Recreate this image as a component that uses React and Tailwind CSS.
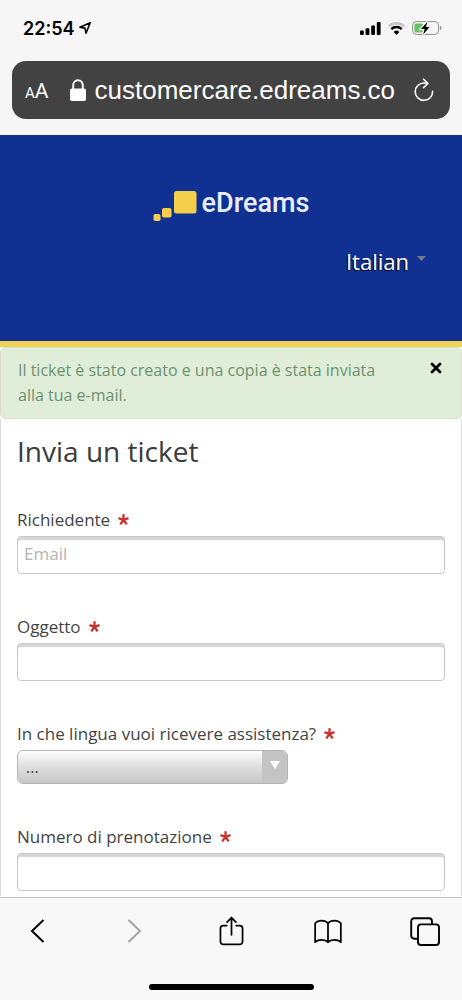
import { useState } from 'react'

const LABEL = 'font-["Open_Sans",sans-serif] text-[17px] leading-[25px] text-[#444]'
const INPUT =
  'h-[38px] w-full rounded-[4px] border border-[#c9c9c9] bg-white px-[6px] pb-[3px] font-["Open_Sans",sans-serif] text-[17px] text-[#444] shadow-[inset_0_3px_1px_#d6d6d6] placeholder:text-[#b5b5b5] focus:outline-none'
const TOOL = 'flex w-[30px] justify-center'

function StatusBar() {
  return (
    <div className="flex h-[61px] items-center justify-between px-5 pb-[5px] pl-[23px]">
      <div className="flex items-center gap-[5px] font-[Inter,sans-serif] text-[18px] font-semibold text-black">
        <span>22:54</span>
        <svg className="h-3 w-3" viewBox="0 0 12 12" fill="none" stroke="currentColor" strokeWidth="1.6" strokeLinejoin="round">
          <path d="M11.2 0.8 L0.9 5.2 L5.9 6.1 L7 11.2 Z" />
        </svg>
      </div>
      <div className="flex items-center gap-[7px]">
        <svg className="h-[13px] w-[21px]" viewBox="0 0 21 13">
          <rect x="0" y="8.5" width="3.8" height="4.5" rx="1" />
          <rect x="5.6" y="6.2" width="3.8" height="6.8" rx="1" />
          <rect x="11.2" y="3.4" width="3.8" height="9.6" rx="1" />
          <rect x="16.8" y="0" width="3.8" height="13" rx="1" />
        </svg>
        <svg className="h-[13px] w-[17px]" viewBox="0 0 17 13" fill="none">
          <path d="M1 4.2 A11 11 0 0 1 16 4.2" stroke="#c4c4c4" strokeWidth="2.4" />
          <path d="M3.3 7.1 A7.6 7.6 0 0 1 13.7 7.1" stroke="#000" strokeWidth="2.5" />
          <path d="M5.7 9.9 A4 4 0 0 1 11.3 9.9 L8.5 12.9 Z" fill="#000" />
        </svg>
        <svg className="h-[14px] w-[30px]" viewBox="0 0 30 14">
          <rect x="0.6" y="0.6" width="26" height="12.8" rx="3.6" fill="none" stroke="#8c8c8c" />
          <rect x="2.4" y="2.4" width="9" height="9.2" rx="1.6" fill="#62c466" />
          <path d="M28.2 4.8 a2.4 2.4 0 0 1 0 4.4 Z" fill="#8c8c8c" />
          <path d="M15.4 0.8 L9 8 H12.6 L11.2 13.4 L17.6 6 H14 Z" fill="#000" stroke="#f6f6f6" strokeWidth="2.6" paintOrder="stroke" />
        </svg>
      </div>
    </div>
  )
}

function AddressBar() {
  return (
    <div className="mx-3 mb-4 flex h-[58px] items-center rounded-[14px] bg-[#424242] pr-4 pl-[13px] text-white">
      <button type="button" aria-label="Dimensione testo" className="mt-1 flex items-baseline font-[Roboto,sans-serif]">
        <span className="text-[15px] leading-6">A</span>
        <span className="text-[21px] leading-6">A</span>
      </button>
      <svg className="ml-[21px] h-[22px] w-4 shrink-0" viewBox="0 0 16 22">
        <rect x="0" y="9.6" width="16" height="12.4" rx="1.8" fill="#fff" />
        <path d="M3.2 10.5 V6.2 a4.8 5 0 0 1 9.6 0 V10.5" fill="none" stroke="#fff" strokeWidth="1.9" />
      </svg>
      <span className="ml-[9px] min-w-0 flex-1 overflow-hidden font-['Liberation_Sans',sans-serif] text-[26px] leading-8 whitespace-nowrap">
        customercare.edreams.co
      </span>
      <button type="button" aria-label="Ricarica" className="ml-2 shrink-0">
        <svg className="h-[24px] w-5" viewBox="0 0 20 24" fill="none" stroke="#fff" strokeWidth="1.6" strokeLinecap="round" strokeLinejoin="round">
          <path d="M18.6 13.4 A8.7 8.7 0 1 1 10 5 L13.4 5.3" />
          <path d="M9.6 1.2 L13.8 5.4 L9.6 9.6" />
        </svg>
      </button>
    </div>
  )
}

function Header() {
  return (
    <header className="flex h-[212px] shrink-0 flex-col border-b-6 border-[#f1d352] bg-[#113192] pt-[52px]">
      <a href="#" className="flex h-[36px] items-start justify-center">
        <svg className="mt-[3px] h-[32px] w-[44px]" viewBox="0 0 44 32" fill="#f5cf4c">
          <rect x="0.5" y="24" width="7" height="7" rx="1.8" />
          <rect x="9" y="18" width="9.5" height="9.5" rx="2" />
          <rect x="21" y="1" width="22.5" height="22.5" rx="2.5" />
        </svg>
        <span className="ml-[5px] font-[Roboto,sans-serif] text-[27px] leading-8 font-medium text-[#e6eeff]">
          eDreams
        </span>
      </a>
      <button
        type="button"
        className="mt-[22px] mr-9 flex items-center gap-2 self-end font-['Open_Sans',sans-serif] text-[22px] leading-8 text-white [text-shadow:-1px_1px_0_#000]"
      >
        Italian
        <svg className="mb-[6px] h-[5px] w-[9px]" viewBox="0 0 9 5" fill="#75798a">
          <path d="M0 0 H9 L4.5 5 Z" />
        </svg>
      </button>
    </header>
  )
}

function Notice({ onClose }) {
  return (
    <div
      role="status"
      className="flex items-start justify-between rounded-[5px] border border-[#d9dfc9] bg-[#e0eed9] py-[10px] pr-[19px] pl-[17px]"
    >
      <p className="max-w-[370px] font-['Open_Sans',sans-serif] text-[16px] leading-[25px] text-[#6b9171]">
        Il ticket è stato creato e una copia è stata inviata alla tua e-mail.
      </p>
      <button type="button" aria-label="Chiudi" onClick={onClose} className="mt-1">
        <svg className="h-3 w-3" viewBox="0 0 12 12" stroke="#000" strokeWidth="2.8" strokeLinecap="round">
          <path d="M2 2 L10 10 M10 2 L2 10" />
        </svg>
      </button>
    </div>
  )
}

function Field({ id, label, children }) {
  return (
    <div className="flex flex-col gap-1">
      <label htmlFor={id} className={LABEL}>
        {label}
        <svg className="mb-1 ml-2 inline-block h-[11px] w-[11px]" viewBox="0 0 11 11" stroke="#cb2f2b" strokeWidth="2.3">
          <path d="M5.5 5.8 V0.3 M5.5 5.8 L0.5 4.2 M5.5 5.8 L10.5 4.2 M5.5 5.8 L2.3 10.4 M5.5 5.8 L8.7 10.4" />
        </svg>
      </label>
      {children}
    </div>
  )
}

function Toolbar() {
  return (
    <nav className="shrink-0 border-t border-[#c4c4c4] bg-[#f8f8f8] pb-[10px]">
      <div className="flex h-[66px] items-center justify-between px-[22px]">
        <button type="button" aria-label="Indietro" className={TOOL}>
          <svg className="h-6 w-[15px]" viewBox="0 0 15 24" fill="none" stroke="#000" strokeWidth="2">
            <path d="M13.5 1 L2 12 L13.5 23" />
          </svg>
        </button>
        <button type="button" aria-label="Avanti" disabled className={TOOL}>
          <svg className="h-6 w-[15px]" viewBox="0 0 15 24" fill="none" stroke="#a3a3a3" strokeWidth="2">
            <path d="M1.5 1 L13 12 L1.5 23" />
          </svg>
        </button>
        <button type="button" aria-label="Condividi" className={TOOL}>
          <svg className="h-[30px] w-[25px]" viewBox="0 0 26 31" fill="none" stroke="#000" strokeWidth="1.8" strokeLinecap="round" strokeLinejoin="round">
            <path d="M8 9.8 H4.5 a3 3 0 0 0 -3 3 V26.5 a3 3 0 0 0 3 3 H21.5 a3 3 0 0 0 3 -3 V12.8 a3 3 0 0 0 -3 -3 H18" />
            <path d="M13 19.5 V1.5 M8.4 6.2 L13 1.5 L17.6 6.2" />
          </svg>
        </button>
        <button type="button" aria-label="Preferiti" className={TOOL}>
          <svg className="h-[25px] w-[28px]" viewBox="0 0 29 25" fill="none" stroke="#000" strokeWidth="1.8" strokeLinejoin="round">
            <path d="M14.5 4 C11.5 0.4 4.5 0.3 1.2 4 V23.6 C4.5 20.5 11.5 20.5 14.5 23.6 C17.5 20.5 24.5 20.5 27.8 23.6 V4 C24.5 0.3 17.5 0.4 14.5 4 Z" />
            <path d="M14.5 4 V23.6" />
          </svg>
        </button>
        <button type="button" aria-label="Schede" className={TOOL}>
          <svg className="h-[29px] w-[30px]" viewBox="0 0 30 29" fill="none" stroke="#000" strokeWidth="1.9">
            <path d="M8 21.8 H4.2 a3 3 0 0 1 -3 -3 V4.2 a3 3 0 0 1 3 -3 H19 a3 3 0 0 1 3 3 V7.5" />
            <rect x="8" y="7.4" width="21" height="20.6" rx="3" />
          </svg>
        </button>
      </div>
      <div className="mx-auto mt-5 h-[6px] w-[165px] rounded-full bg-black" />
    </nav>
  )
}

export default function App() {
  const [noticeOpen, setNoticeOpen] = useState(true)

  return (
    <div className="flex min-h-screen flex-col bg-[#f6f6f6]">
      <StatusBar />
      <AddressBar />
      <Header />
      <main className="flex-1 bg-white">
        {noticeOpen && <Notice onClose={() => setNoticeOpen(false)} />}
        <form className="border-x border-[#dcdcdc] px-4 pt-[14px] pb-[5px]">
          <h1 className="font-['Open_Sans',sans-serif] text-[28px] leading-9 text-[#3b3b3b]">Invia un ticket</h1>
          <div className="mt-[38px] flex flex-col gap-10">
            <Field id="requester" label="Richiedente">
              <input id="requester" type="email" placeholder="Email" className={INPUT} />
            </Field>
            <Field id="subject" label="Oggetto">
              <input id="subject" type="text" className={INPUT} />
            </Field>
            <Field id="language" label="In che lingua vuoi ricevere assistenza?">
              <div className="relative w-[271px]">
                <select
                  id="language"
                  className="h-[34px] w-full appearance-none rounded-[6px] border border-[#b5b5b5] bg-linear-to-b from-white via-[#dedede] to-[#c8c8c8] pr-8 pl-2 font-['Open_Sans',sans-serif] text-[16px] text-[#444]"
                >
                  <option>...</option>
                </select>
                <span className="pointer-events-none absolute inset-y-px right-px flex w-[25px] items-center justify-center rounded-r-[5px] bg-[#c4c4c4]">
                  <svg className="mb-1 h-2 w-[10px]" viewBox="0 0 10 8" fill="#fff">
                    <path d="M0 0 H10 L5 8 Z" />
                  </svg>
                </span>
              </div>
            </Field>
            <Field id="booking" label="Numero di prenotazione">
              <input id="booking" type="text" className={INPUT} />
            </Field>
          </div>
        </form>
      </main>
      <Toolbar />
    </div>
  )
}
